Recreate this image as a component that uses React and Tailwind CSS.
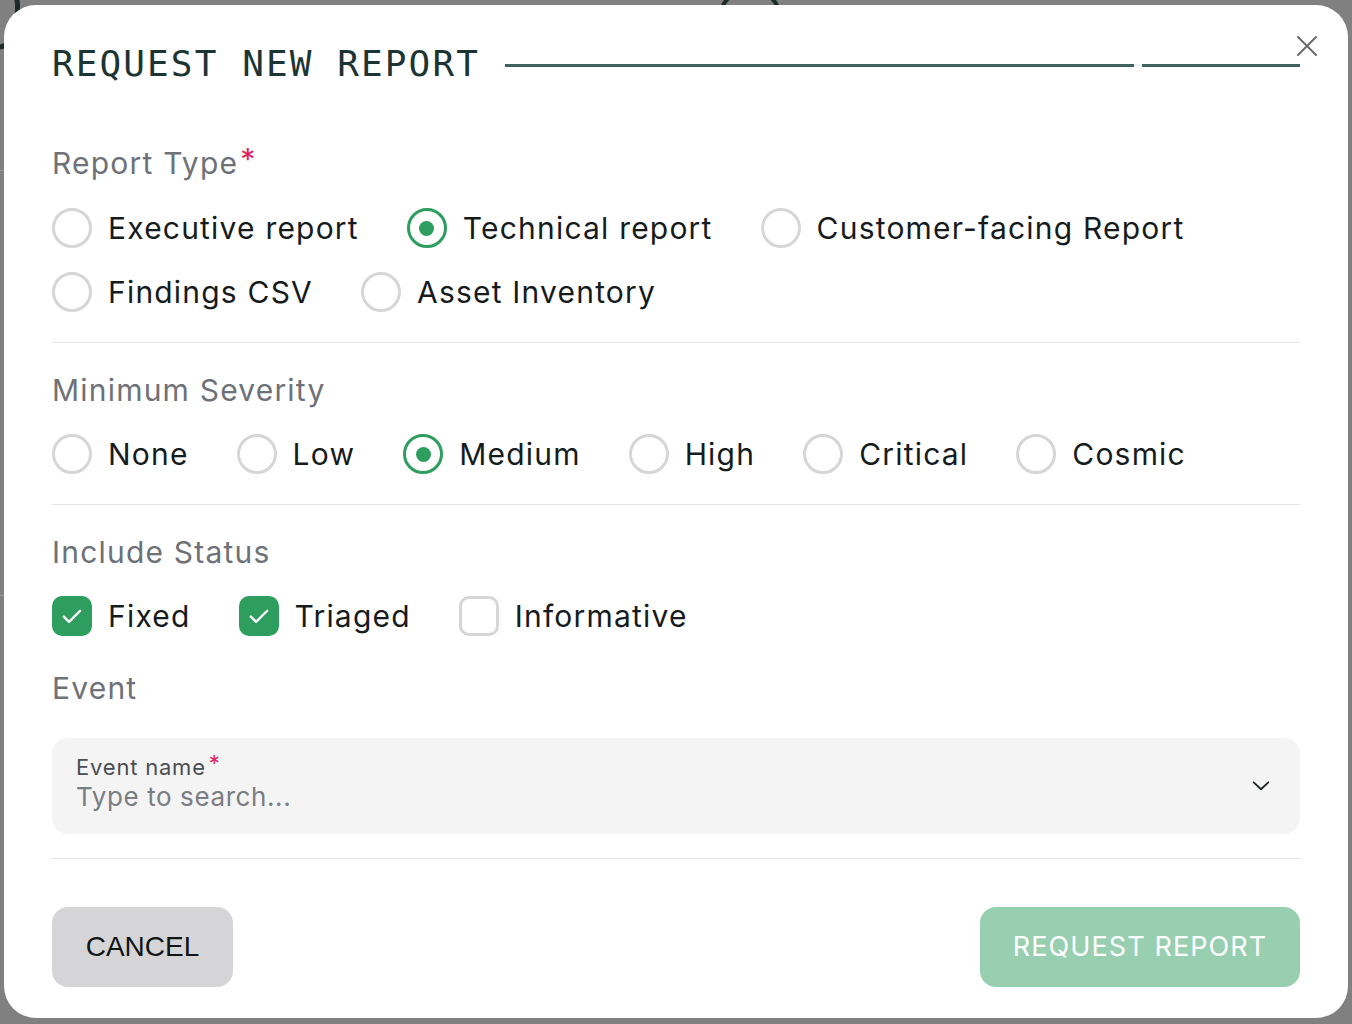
import React from 'react';

const sans = { fontFamily: 'Inter, "Noto Sans", sans-serif' };

const Radio = ({ label, checked }) => (
  <label className="flex items-center gap-4 cursor-pointer">
    <span
      className={`w-10 h-10 rounded-full border-[3px] flex items-center justify-center ${
        checked ? 'border-[#2e9e5f]' : 'border-[#d6d6d6]'
      }`}
    >
      {checked && <span className="w-[15px] h-[15px] rounded-full bg-[#2e9e5f]" />}
    </span>
    <span className="text-[30px] leading-10 tracking-[1.2px] text-[#161b1d]">{label}</span>
  </label>
);

const Checkbox = ({ label, checked }) => (
  <label className="flex items-center gap-4 cursor-pointer">
    <span
      className={`w-10 h-10 rounded-[10px] flex items-center justify-center ${
        checked ? 'bg-[#2e9e5f]' : 'border-[3px] border-[#d6d6d6]'
      }`}
    >
      {checked && (
        <svg className="w-7 h-7 text-white" fill="none" stroke="currentColor" viewBox="0 0 24 24">
          <path strokeLinecap="round" strokeLinejoin="round" strokeWidth={2} d="M5 12.5l4.5 4.5L19 7.5" />
        </svg>
      )}
    </span>
    <span className="text-[30px] leading-10 tracking-[1.2px] text-[#161b1d]">{label}</span>
  </label>
);

const SectionLabel = ({ children, required }) => (
  <div className="text-[30px] leading-9 tracking-[1.2px] text-[#6e7178] flex items-start">
    {children}
    {required && <span className="text-[#e0245e] text-[30px] leading-7 ml-[2px]">*</span>}
  </div>
);

const App = () => {
  return (
    <div className="relative w-[1352px] h-[1024px] bg-[#808080] overflow-hidden" style={sans}>
      {/* backdrop content */}
      <div className="absolute -left-[30px] -top-[20px] w-[50px] h-[70px] rounded-full border-[5px] border-[#1c2a2a]" />
      <div className="absolute left-[720px] -top-[8px] w-[60px] h-[40px] rounded-full border-[4px] border-[#1c2a2a]" />
      <div className="absolute left-0 top-[170px] w-[4px] h-[1px] bg-[#9a9a9a]" />
      <div className="absolute left-0 top-[595px] w-[4px] h-[1px] bg-[#9a9a9a]" />

      {/* modal */}
      <div className="absolute left-[4px] top-[5px] w-[1344px] h-[1013px] bg-white rounded-[32px] px-[48px]">
        {/* header */}
        <div className="flex items-center pt-[39px] h-[79px]">
          <h2
            className="text-[36px] leading-10 tracking-[2.1px] text-[#1d3434] whitespace-nowrap"
            style={{ fontFamily: '"DejaVu Sans Mono", monospace' }}
          >
            REQUEST NEW REPORT
          </h2>
          <div className="flex-1 flex items-center ml-[25px] mt-[2px]">
            <div className="flex-1 h-[3px] bg-[#3d6461]" />
            <div className="w-[8px] h-[3px] bg-[#f2f2f2]" />
            <div className="w-[158px] h-[3px] bg-[#3d6461]" />
          </div>
        </div>
        <button className="absolute right-[28px] top-[28px] w-[26px] h-[26px] flex items-center justify-center text-[#6b6b6b]">
          <svg className="w-[24px] h-[24px]" fill="none" stroke="currentColor" viewBox="0 0 24 24">
            <path strokeLinecap="round" strokeWidth={2} d="M3 3l18 18M21 3L3 21" />
          </svg>
        </button>

        {/* report type */}
        <div className="mt-[61px]">
          <SectionLabel required>Report Type</SectionLabel>
          <div className="mt-[27px] flex flex-wrap gap-x-[48px] gap-y-6">
            <Radio label="Executive report" />
            <Radio label="Technical report" checked />
            <Radio label="Customer-facing Report" />
            <Radio label="Findings CSV" />
            <Radio label="Asset Inventory" />
          </div>
        </div>
        <div className="mt-[30px] h-px bg-[#e4e4e4]" />

        {/* minimum severity */}
        <div className="mt-[29px]">
          <SectionLabel>Minimum Severity</SectionLabel>
          <div className="mt-[26px] flex flex-wrap gap-x-[48px] gap-y-6">
            <Radio label="None" />
            <Radio label="Low" />
            <Radio label="Medium" checked />
            <Radio label="High" />
            <Radio label="Critical" />
            <Radio label="Cosmic" />
          </div>
        </div>
        <div className="mt-[30px] h-px bg-[#e4e4e4]" />

        {/* include status */}
        <div className="mt-[29px]">
          <SectionLabel>Include Status</SectionLabel>
          <div className="mt-[26px] flex flex-wrap gap-x-[48px] gap-y-6">
            <Checkbox label="Fixed" checked />
            <Checkbox label="Triaged" checked />
            <Checkbox label="Informative" />
          </div>
        </div>

        {/* event */}
        <div className="mt-[34px]">
          <SectionLabel>Event</SectionLabel>
          <div className="mt-[32px] h-[96px] rounded-[16px] bg-[#f4f4f4] pl-[24px] pr-[28px] flex items-center">
            <div className="flex-1 flex flex-col pb-[6px]">
              <div className="flex items-start text-[22px] leading-7 tracking-[0.8px] text-[#4a4d52]">
                Event name
                <span className="text-[#e0245e] text-[22px] leading-5 ml-[3px]">*</span>
              </div>
              <div className="text-[26px] leading-8 tracking-[0.6px] text-[#7a7d82]">Type to search...</div>
            </div>
            <svg className="w-[22px] h-[22px] text-[#1f2526]" fill="none" stroke="currentColor" viewBox="0 0 24 24">
              <path strokeLinecap="round" strokeLinejoin="round" strokeWidth={2} d="M4 8l8 7.5 8-7.5" />
            </svg>
          </div>
        </div>
        <div className="mt-[24px] h-px bg-[#e4e4e4]" />

        {/* actions */}
        <div className="mt-[48px] flex items-center justify-between">
          <button
            className="w-[181px] h-[80px] rounded-[16px] bg-[#d5d5d8] text-[28px] text-[#111516]"
            style={{ fontFamily: '"Liberation Sans", Arial, sans-serif' }}
          >
            CANCEL
          </button>
          <button className="w-[320px] h-[80px] rounded-[16px] bg-[#98cfb0] text-[27px] tracking-[1.1px] text-white">
            REQUEST REPORT
          </button>
        </div>
      </div>
    </div>
  );
};

export default App;
